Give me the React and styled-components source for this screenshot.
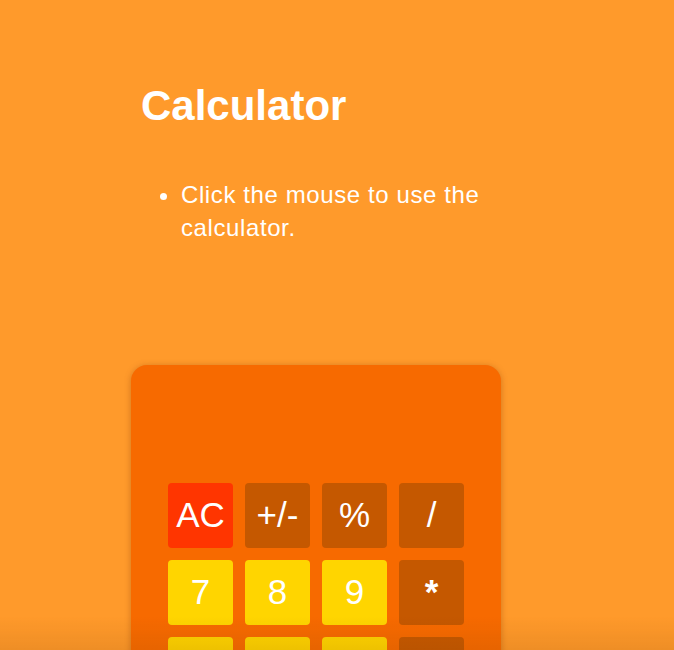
import React from 'react'
import styled, { createGlobalStyle } from 'styled-components'

const GlobalStyle = createGlobalStyle`
  html, body {
    margin: 0;
    padding: 0;
    background: #ff9a2b;
  }
  body {
    font-family: "Liberation Sans", Arial, sans-serif;
    color: #fff;
  }
  body::after {
    content: "";
    position: fixed;
    left: 0;
    right: 0;
    bottom: 0;
    height: 34px;
    pointer-events: none;
    background: linear-gradient(to bottom, rgba(120, 60, 0, 0), rgba(120, 60, 0, 0.12));
  }
`

const Page = styled.div`
  width: 350px;
  padding: 82px 0 40px 141px;
`

const Title = styled.h1`
  margin: 0;
  font-size: 42px;
  font-weight: 700;
  line-height: 48px;
`

const Notes = styled.ul`
  margin: 48px 0 0;
  padding-left: 40px;
  font-size: 24px;
  line-height: 33px;
  letter-spacing: 0.6px;
`

const Calc = styled.div`
  width: 370px;
  margin: 121px -10px 0;
  box-sizing: border-box;
  padding: 0 37px 37px;
  background: #f76a00;
  border-radius: 16px;
  box-shadow: 0 1px 6px rgba(120, 50, 0, 0.35);
`

const Display = styled.div`
  height: 118px;
`

const Keys = styled.div`
  display: grid;
  grid-template-columns: repeat(4, 65px);
  gap: 12px;
`

const colors = {
  clear: '#ff3500',
  op: '#c55800',
  num: '#ffd500',
}

const Key = styled.button`
  height: 65px;
  border: none;
  border-radius: 4px;
  padding: 0 0 2px;
  background: ${p => colors[p.$kind]};
  color: #fff;
  font-family: "Liberation Sans", Arial, sans-serif;
  font-size: 35px;
  font-weight: ${p => (p.$bold ? 700 : 400)};
  display: flex;
  align-items: center;
  justify-content: center;
  cursor: pointer;
  grid-column: span ${p => p.$span || 1};
`

const keys = [
  ['AC', 'clear'], ['+/-', 'op'], ['%', 'op'], ['/', 'op'],
  ['7', 'num'], ['8', 'num'], ['9', 'num'], ['*', 'op', true],
  ['4', 'num'], ['5', 'num'], ['6', 'num'], ['-', 'op'],
  ['1', 'num'], ['2', 'num'], ['3', 'num'], ['+', 'op'],
  ['0', 'num', false, 2], ['.', 'num'], ['=', 'op'],
]

export default function App() {
  return (
    <>
      <GlobalStyle />
      <Page>
        <Title>Calculator</Title>
        <Notes>
          <li>Click the mouse to use the calculator.</li>
        </Notes>
        <Calc>
          <Display />
          <Keys>
            {keys.map(([label, kind, bold, span]) => (
              <Key key={label} $kind={kind} $bold={bold} $span={span}>
                {label}
              </Key>
            ))}
          </Keys>
        </Calc>
      </Page>
    </>
  )
}
